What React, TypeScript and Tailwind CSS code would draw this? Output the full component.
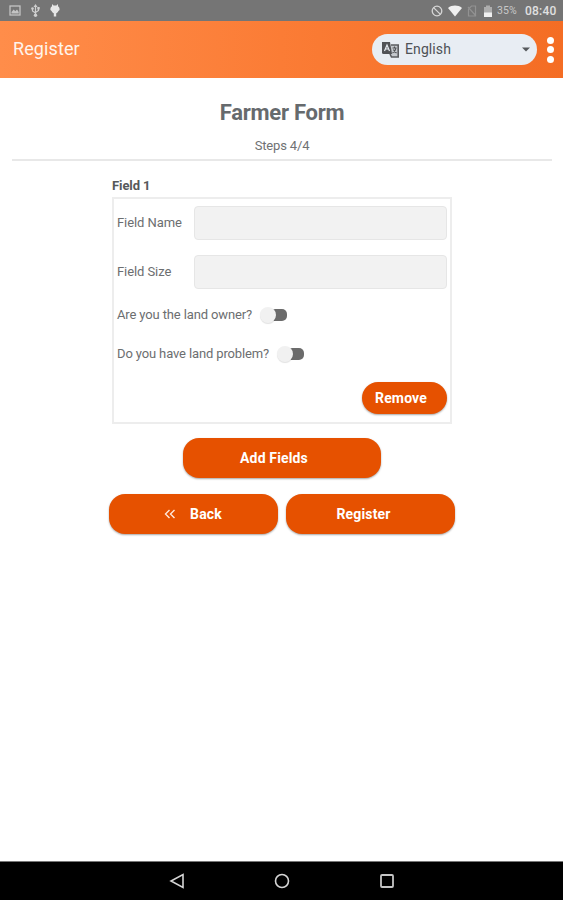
import { useState } from 'react';
import type { ReactNode } from 'react';

interface ToggleProps {
    label: string;
    checked: boolean;
    onChange: () => void;
}

const Toggle = ({ label, checked, onChange }: ToggleProps) => (
    <div className="flex h-[17px] items-center gap-2">
        <span className="text-[13px] leading-[17px] whitespace-nowrap tracking-[-0.13px] text-[#6c6e70]">{label}</span>
        <button onClick={onChange} aria-label={label} className="relative h-4 w-[27px]">
            <span className="absolute top-[2px] right-0 h-[12px] w-6 rounded-[5px] bg-[#6b6b6b]" />
            <span className={`absolute top-0 size-4 rounded-full bg-[#f1f1f1] shadow-[0_1px_1px_rgba(0,0,0,0.12)] ${checked ? 'right-0' : 'left-0'}`} />
        </button>
    </div>
);

const TextField = ({ label }: { label: string }) => (
    <label className="flex items-center">
        <span className="w-[77px] text-[13px] tracking-[-0.08px] text-[#6c6e70]">{label}</span>
        <input className="h-[34px] w-[254px] rounded-[4px] border border-[#e6e6e6] bg-[#f2f2f2] px-2 text-[13px] outline-none" />
    </label>
);

const ActionButton = ({ className, children }: { className: string; children: ReactNode }) => (
    <button className={`flex items-center justify-center bg-[#e65100] text-[14px] font-bold tracking-[0.15px] text-white shadow-[0_1px_2px_rgba(0,0,0,0.35)] ${className}`}>
        {children}
    </button>
);

const StatusBar = () => (
    <div className="flex h-[21px] items-center justify-between bg-[#757575] text-[#e0e0e0]">
        <div className="flex items-center pl-[9px]">
            <svg width="12" height="11" viewBox="0 0 12 11">
                <rect x="1" y="1" width="10" height="9" fill="none" stroke="#c4c4c4" strokeWidth="1.3" />
                <path d="M2.5 8.5V7L4.7 4.5 6.3 6.2 8 4.5 9.7 7v1.5z" fill="#c4c4c4" />
            </svg>
            <svg className="ml-[10px]" width="9" height="13" viewBox="0 0 9 13" fill="none" stroke="#d0d0d0" strokeWidth="1.2">
                <path d="M4.5 11V2M1.5 4.5V7L4.5 9M7.5 4V6.5L4.5 8.5" />
                <path d="M2.5 3 4.5 0 6.5 3z" fill="#d0d0d0" stroke="none" />
                <circle cx="4.5" cy="11.2" r="1.7" fill="#d0d0d0" stroke="none" />
                <circle cx="1.5" cy="4.5" r="1.3" fill="#d0d0d0" stroke="none" />
                <path d="M6.3 3h2.4v2.400H6.300z" fill="#d0d0d0" stroke="none" />
            </svg>
            <svg className="ml-[10px]" width="10" height="13" viewBox="0 0 10 13" fill="#e6e6e6">
                <path d="M2 0 3.600 1.500h2.800L8 0v2.300C9.400 3 9.600 4.500 9.600 6L8.400 7C7.800 8.500 7 9 6.200 9.200V12.500H3.800V9.200C3 9 2.200 8.500 1.600 7L.4 6C.4 4.500.6 3 2 2.300z" />
            </svg>
        </div>
        <div className="flex items-center pr-[6px]">
            <svg width="12" height="12" viewBox="0 0 12 12" fill="none" stroke="#d6d6d6" strokeWidth="1.3">
                <circle cx="6" cy="6" r="4.8" />
                <path d="m2.6 2.6 6.8 6.8" />
            </svg>
            <svg className="ml-[5px]" width="14" height="12" viewBox="0 0 14 12" fill="#efefef">
                <path d="M7 11.5 0 3C4-.2 10-.2 14 3z" />
            </svg>
            <svg className="ml-[5px]" width="10" height="12" viewBox="0 0 10 12" fill="none" stroke="#929292" strokeWidth="1.2">
                <path d="M1.5 11V4L4.500 1H8.500V11zM1 2l8 9" />
            </svg>
            <svg className="ml-[7px]" width="8" height="12" viewBox="0 0 8 12">
                <path d="M0 2h2V.500h4V2h2v10H0z" fill="#adadad" />
                <path d="M0 7.500h8V12H0z" fill="#f0f0f0" />
            </svg>
            <span className="ml-[5px] w-[21px] text-[10.500px] tracking-[0.1px] text-[#c8c8c8]">35%</span>
            <span className="ml-[7px] w-[32px] text-[12px] font-medium tracking-[0.2px] whitespace-nowrap">08:40</span>
        </div>
    </div>
);

const Header = () => (
    <header className="flex h-[57px] items-center bg-linear-to-r from-[#ff8d4a] via-[#fb7c35] to-[#f46d24]">
        <h1 className="flex-1 pb-[3px] pl-[13px] text-[18px] tracking-[0.1px] text-[#fff4ec]">Register</h1>
        <button className="flex h-[31px] w-[165px] items-center rounded-full bg-[#e8edf3] pr-[7px] pl-[10px]">
            <svg width="18" height="17" viewBox="0 0 18 17">
                <path d="M9 4h7.200v12H9.500L8 13" fill="#c4c8cd" stroke="#5a5c60" strokeWidth="1.600" />
                <path d="M0 1h8l2 12H1.500A1.500 1.500 0 0 1 0 11.500z" fill="#515357" />
                <path d="M2.500 10 5 4 7.500 10M3.400 8h3.200" fill="none" stroke="#e8edf3" strokeWidth="1.200" />
                <path d="M10.500 7h4M12.500 5.500V7M14 7c-.4 2.500-1.500 4-3.500 5M11.500 8.500c.6 1.600 1.600 2.600 3 3.500" fill="none" stroke="#4c4e52" strokeWidth="1.100" />
            </svg>
            <span className="ml-[5px] flex-1 text-left text-[14px] tracking-[0.1px] text-[#4e5155]">English</span>
            <svg width="8" height="5" viewBox="0 0 8 5" fill="#55585c">
                <path d="M0 .500h8L4 4.500z" />
            </svg>
        </button>
        <div className="mr-[9px] ml-[9px] flex w-[8px] flex-col items-center gap-[2.500px]">
            <span className="size-[7px] rounded-full bg-white" />
            <span className="size-[7px] rounded-full bg-white" />
            <span className="size-[7px] rounded-full bg-white" />
        </div>
    </header>
);

export default function App() {
    const [owner, setOwner] = useState(false);
    const [problem, setProblem] = useState(false);

    return (
        <div className="flex h-[900px] w-[563px] flex-col overflow-hidden bg-white font-['Roboto',sans-serif]">
            <StatusBar />
            <Header />

            <main className="flex-1">
                <div className="mr-[11px] ml-3 h-[83px] border-b-2 border-[#e8e8e8] pt-[20px] text-center">
                    <h2 className="text-[22px] leading-[30px] font-bold tracking-[-0.25px] text-[#666a6d]">Farmer Form</h2>
                    <p className="mt-[9px] text-[13px] leading-[17px] tracking-[-0.15px] text-[#707274]">Steps 4/4</p>
                </div>

                <section className="ml-[112px] w-[340px] pt-[16px]">
                    <h3 className="text-[13px] leading-[17px] font-bold tracking-[-0.1px] text-[#55585a]">Field 1</h3>
                    <div className="mt-[3px] h-[227px] border-2 border-[#ededed] pt-[7px] pr-[3px] pl-[3px]">
                        <div className="flex flex-col gap-[15px]">
                            <TextField label="Field Name" />
                            <TextField label="Field Size" />
                        </div>
                        <div className="mt-[17px] flex flex-col gap-[22px]">
                            <Toggle label="Are you the land owner?" checked={owner} onChange={() => setOwner(!owner)} />
                            <Toggle label="Do you have land problem?" checked={problem} onChange={() => setProblem(!problem)} />
                        </div>
                        <ActionButton className="mt-[20px] ml-auto h-[32px] w-[85px] rounded-full pr-[7px]">Remove</ActionButton>
                    </div>
                </section>

                <ActionButton className="mt-[14px] ml-[183px] h-[40px] w-[198px] rounded-[16px] pr-[16px]">Add Fields</ActionButton>
                <div className="mt-4 ml-[109px] flex gap-2">
                    <ActionButton className="h-[40px] w-[169px] rounded-[16px] pr-[1px]">
                        <svg className="mr-[14px]" width="12" height="12" viewBox="0 0 12 12" fill="none" stroke="#ffe9dc" strokeWidth="1.400">
                            <path d="M5.500 2 1.500 6l4 4M10.500 2l-4 4 4 4" />
                        </svg>
                        Back
                    </ActionButton>
                    <ActionButton className="h-[40px] w-[169px] rounded-[16px] pr-[14px]">Register</ActionButton>
                </div>
            </main>

            <nav className="flex h-[39px] items-center justify-center gap-[89px] border-t border-[#777] bg-black">
                <svg width="16" height="16" viewBox="0 0 16 16" fill="none" stroke="#d5d5d5" strokeWidth="1.600">
                    <path d="M14 1.500v13L2 8z" />
                </svg>
                <svg width="16" height="16" viewBox="0 0 16 16" fill="none" stroke="#d5d5d5" strokeWidth="1.600">
                    <circle cx="8" cy="8" r="6.500" />
                </svg>
                <svg width="16" height="16" viewBox="0 0 16 16" fill="none" stroke="#c5c5c5" strokeWidth="1.800">
                    <rect x="2" y="2" width="12" height="12" rx="1" />
                </svg>
            </nav>
        </div>
    );
}
